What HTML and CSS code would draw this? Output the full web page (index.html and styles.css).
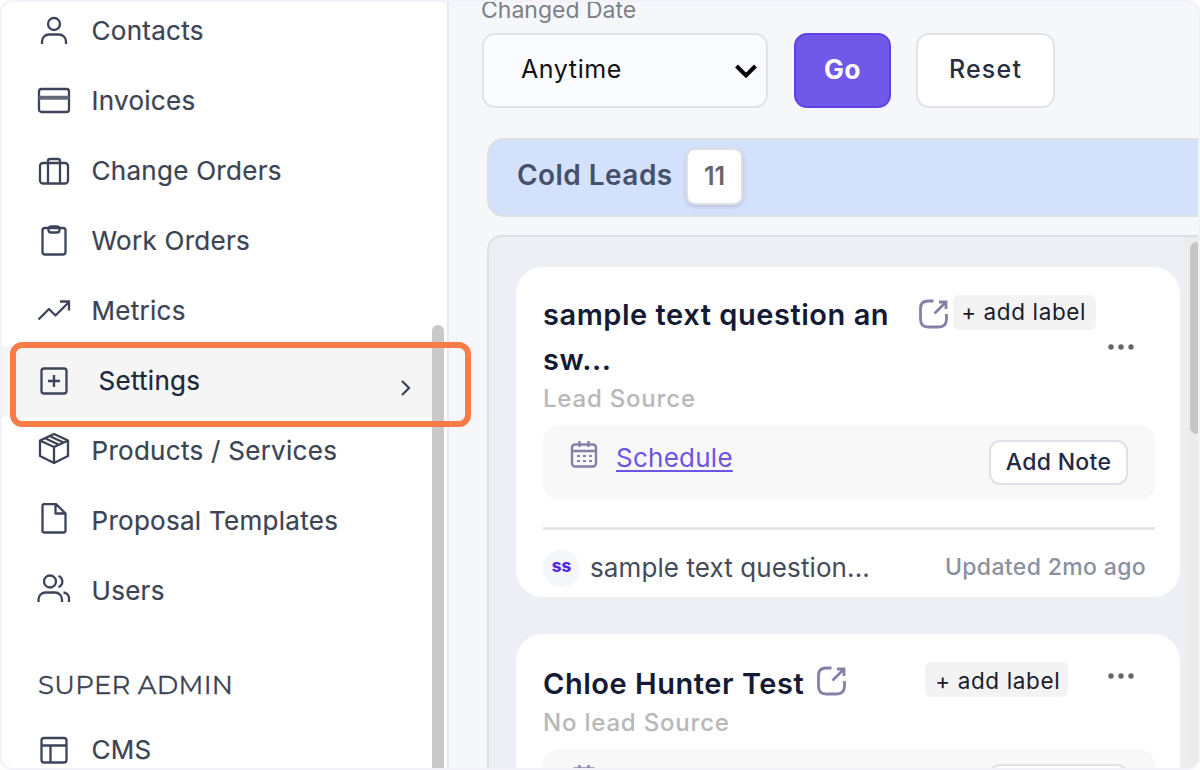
FILE: index.html
```html
<!DOCTYPE html>
<html lang="en">
<head>
<meta charset="utf-8">
<title>Cold Leads</title>
<link rel="stylesheet" href="styles.css">
</head>
<body>
<div class="app">
  <aside class="sidebar">
    <nav class="menu">
      <a class="item"><svg class="icon" viewBox="0 0 36 36"><circle cx="18" cy="11" r="6"/><path d="M6 31v-2.500a7 7 0 0 1 7-7h10a7 7 0 0 1 7 7V31"/></svg><span>Contacts</span></a>
      <a class="item"><svg class="icon" viewBox="0 0 36 36"><rect x="3" y="6" width="30" height="23" rx="2.500"/><path class="stripe" d="M3 14.800h30"/></svg><span>Invoices</span></a>
      <a class="item"><svg class="icon" viewBox="0 0 36 36"><rect x="4" y="10" width="28" height="20.500" rx="3"/><path d="M12 30V8q0-2 2-2h8q2 0 2 2v22"/></svg><span>Change Orders</span></a>
      <a class="item"><svg class="icon" viewBox="0 0 36 36"><rect x="6.500" y="5" width="23" height="26.500" rx="2.500"/><path d="M12.500 6.500q0-3 3-3h5q3 0 3 3v.5q0 2.500-2.500 2.500h-6q-2.500 0-2.500-2.500z"/></svg><span>Work Orders</span></a>
      <a class="item"><svg class="icon" viewBox="0 0 36 36"><path d="M2.500 26.500 13 16l6.500 6.500L32.500 9.500M24 8.500h9v9"/></svg><span>Metrics</span></a>
      <a class="item active"><svg class="icon" viewBox="0 0 36 36"><rect x="5.500" y="5.500" width="25" height="25" rx="2.500"/><path d="M18 12v12M12 18h12"/></svg><span>Settings</span><svg class="chevron" viewBox="0 0 12 18"><path d="m2 2 7 7-7 7"/></svg></a>
      <a class="item"><svg class="icon" viewBox="0 0 36 36"><path d="M18 1 32 7.500V23l-14 7-14-7V7.500zM4 7.500 18 14l14-6.500M18 14v16M9 5.200l14 6.500M13.500 3l14 6.500"/></svg><span>Products / Services</span></a>
      <a class="item"><svg class="icon" viewBox="0 0 36 36"><path d="M6.500 3q0-2 2-2H20l9.500 9.500v17q0 2-2 2h-19q-2 0-2-2zM19.500 1.500v9h10"/></svg><span>Proposal Templates</span></a>
      <a class="item"><svg class="icon" viewBox="0 0 36 36"><circle cx="14" cy="8.500" r="6"/><path d="M2.500 29v-2.500a7 7 0 0 1 7-7H19a7 7 0 0 1 7 7V29M22.500 3a6 6 0 0 1 0 11.200M27.500 19.500a6 6 0 0 1 5.500 6.500v3"/></svg><span>Users</span></a>
      <h2 class="group"><span>SUPER ADMIN</span></h2>
      <a class="item"><svg class="icon" viewBox="0 0 36 36"><rect x="5.500" y="6" width="25" height="24.500" rx="2.500"/><path d="M5.500 13.500h25M14.500 13.500v17"/></svg><span>CMS</span></a>
    </nav>
    <i class="side-thumb"></i>
  </aside>
  <main class="main">
    <div class="label"><span>Changed Date</span></div>
    <div class="filters">
      <div class="select"><span>Anytime</span><svg viewBox="0 0 24 16"><path d="m2.500 3 9.500 9.500L21.500 3"/></svg></div>
      <button class="btn go"><span>Go</span></button>
      <button class="btn reset"><span>Reset</span></button>
    </div>
    <header class="column-head"><span class="column-name">Cold Leads</span><span class="count">11</span></header>
    <section class="list">
      <div class="cards">
        <article class="card">
          <div class="card-top two-line">
            <h3><span>sample text question an</span><br><span>sw...</span></h3>
            <svg class="open" viewBox="0 0 30 30"><path d="M14.500 2H9Q1.500 2 1.500 9.500v10.500Q1.500 28 9 28h10.500Q27.500 28 27.500 20v-5M15.500 14.500 26 4M20 3h7v7"/></svg>
            <div class="tools"><span class="tag">+ add label</span><svg class="dots" viewBox="0 0 28 8"><circle cx="4" cy="4" r="2.700"/><circle cx="14" cy="4" r="2.700"/><circle cx="24" cy="4" r="2.700"/></svg></div>
          </div>
          <p class="source">Lead Source</p>
          <div class="schedule">
            <svg class="cal" viewBox="0 0 28 30"><rect x="2" y="4.500" width="24" height="22" rx="3"/><path d="M2 11h24M9.500 1v6M18.500 1v6"/><path class="pips" d="M7 16h3M13 16h3M19 16h3M7 21h3M13 21h3M19 21h3"/></svg>
            <a class="link">Schedule</a><button class="note"><span>Add Note</span></button>
          </div>
          <footer class="foot"><span class="avatar">ss</span><span class="who">sample text question...</span><span class="when">Updated 2mo ago</span></footer>
        </article>
        <article class="card">
          <div class="card-top">
            <h3><span>Chloe Hunter Test</span></h3>
            <svg class="open" viewBox="0 0 30 30"><path d="M14.500 2H9Q1.500 2 1.500 9.500v10.500Q1.500 28 9 28h10.500Q27.500 28 27.500 20v-5M15.500 14.500 26 4M20 3h7v7"/></svg>
            <div class="tools"><span class="tag">+ add label</span><svg class="dots" viewBox="0 0 28 8"><circle cx="4" cy="4" r="2.700"/><circle cx="14" cy="4" r="2.700"/><circle cx="24" cy="4" r="2.700"/></svg></div>
          </div>
          <p class="source">No lead Source</p>
          <div class="schedule">
            <svg class="cal" viewBox="0 0 28 30"><rect x="2" y="4.500" width="24" height="22" rx="3"/><path d="M2 11h24M9.500 1v6M18.500 1v6"/></svg>
            <button class="note"></button>
          </div>
        </article>
      </div>
      <div class="track"><i></i></div>
    </section>
  </main>
  <div class="highlight"></div>
</div>
</body>
</html>
```
FILE: styles.css
```css
* { box-sizing: border-box; }
body { margin: 0; width: 1200px; height: 770px; overflow: hidden; background: #fff; font-family: Inter, "Liberation Sans", sans-serif; }
h2, h3, p { margin: 0; font-weight: 400; }
button { font-family: inherit; padding: 0; margin: 0; }
span { white-space: nowrap; }
.app { position: relative; width: 1200px; height: 770px; display: flex; border: 2px solid #f2f2f8; border-radius: 12px; overflow: hidden; background: #f6f7fb; }
.sidebar { position: relative; width: 447px; flex: none; background: #fff; border-right: 2px solid #e7e8f1; overflow: hidden; }
.menu { margin-top: -6px; }
.item { display: flex; align-items: center; height: 70px; padding-left: 34px; color: #3c4353; font-size: 26px; letter-spacing: .28px; }
.icon { width: 36px; height: 36px; flex: none; margin-right: 19.500px; fill: none; stroke: #3d4459; stroke-width: 2.3; stroke-linejoin: round; }
.icon .stripe { stroke-width: 4; stroke: #62687a; }
.item > span { padding-bottom: 2px; -webkit-text-stroke: .2px; }
.active { background: #f5f5f5; color: #20263a; width: 430px; position: relative; top: 1px; }
.active > span { margin-left: 7px; padding-bottom: 3px; }
.active .icon { margin-top: -2px; }
.chevron { width: 12px; height: 18px; margin: 12px 20px 0 auto; fill: none; stroke: #3d4459; stroke-width: 2.2; }
.group { height: 89px; padding: 41px 0 0 36px; font-family: Montserrat, Inter, sans-serif; font-size: 26px; letter-spacing: .3px; line-height: 36px; color: #3c4353; -webkit-text-stroke: .3px; }
.side-thumb { position: absolute; left: 430px; top: 323px; width: 12px; height: 460px; border-radius: 6px; background: #c9c9c9; }
.main { flex: 1; min-width: 0; padding-left: 33px; }
.label { height: 37px; margin: -6px 0 0 -1px; line-height: 28px; font-size: 23px; color: #7c7f88; }
.filters { display: flex; height: 75px; gap: 26px; }
.select { width: 286px; display: flex; align-items: center; padding: 0 8px 4px 37px; border: 2px solid #e2e3e8; border-radius: 13px; background: #fafbfe; font-size: 25px; letter-spacing: .6px; color: #111; }
.select svg { width: 24px; height: 16px; margin-left: auto; margin-top: 5px; fill: none; stroke: #000; stroke-width: 4; }
.btn { border: 2px solid #e2e3e8; border-radius: 13px; background: #fff; font-size: 25px; letter-spacing: 1.2px; padding-bottom: 4px; }
.go { width: 97px; background: #7058e8; border-color: #633fe5; color: #fff; font-size: 26.500px; letter-spacing: .4px; font-weight: 700; }
.reset { width: 139px; margin-left: -1px; color: #292d3e; font-weight: 500; }
.column-head { display: flex; height: 79px; margin: 30px 0 0 5px; padding-left: 28px; border: 2px solid #dedfe3; border-right: 0; border-radius: 17px 0 0 17px; background: #d4e1fc; }
.column-name { width: 169px; line-height: 71px; font-size: 28px; font-weight: 600; letter-spacing: .45px; color: #465069; }
.count { width: 57px; height: 57px; margin-top: 8px; border: 2px solid #e0e0e3; border-radius: 9px; background: #fff; box-shadow: 0 2px 4px #0002; font-size: 25px; font-weight: 600; line-height: 52px; text-align: center; color: #666; }
.list { display: flex; height: 540px; margin: 18px 0 0 5px; border: 2px solid #dedfe2; border-right: 0; border-radius: 15px 0 0 0; background: #edeff5; }
.cards { width: 696px; flex: none; padding: 30px 5px 0 27px; }
.card { height: 330px; padding: 24px 25px 0 27px; margin-bottom: 37px; border-radius: 27px; background: #fff; }
.card-top { display: flex; height: 51px; }
.two-line { height: 94px; }
h3 { padding-top: 1px; font-size: 29px; font-weight: 600; letter-spacing: .54px; line-height: 45px; color: #141a34; }
.card:nth-child(2) h3 { padding-top: 3px; }
.open { width: 30px; height: 30px; flex: none; margin: 8px 0 0 13px; fill: none; stroke: #8580a7; stroke-width: 2.8; }
.two-line .open { margin-left: 30px; }
.tools { display: flex; flex: 1; margin-left: 4px; }
.tag { height: 35px; width: 143px; margin-top: 4px; border-radius: 6px; background: #f3f3f3; font-size: 22.500px; letter-spacing: .62px; line-height: 34px; padding-left: 8px; color: #191c2a; }
.card:nth-child(2) .tag { margin-left: 74px; padding: 2px 0 0 10px; }
.dots { width: 28px; height: 8px; margin: 14px 20px 0 auto; fill: #666; }
.two-line .tools { flex-direction: column; }
.two-line .dots { margin-top: 13px; }
.source { height: 40px; line-height: 28px; font-size: 24px; font-weight: 500; letter-spacing: .8px; color: #b8b8b8; }
.schedule { display: flex; height: 75px; border-radius: 16px; background: #f8f8f8; }
.cal { width: 28px; height: 30px; margin: 15px 0 0 27px; fill: none; stroke: #8580a7; stroke-width: 2.4; }
.cal .pips { stroke-width: 2; }
.link { margin: 16px 0 0 18px; height: 34px; line-height: 34px; font-size: 26px; letter-spacing: .25px; color: #6e54e5; text-decoration: underline; text-decoration-thickness: 2px; text-underline-offset: 3px; }
.note { width: 139px; height: 45px; margin: 15px 27px 0 auto; padding-bottom: 2px; border: 2px solid #dfe0e8; border-radius: 11px; background: #fff; font-size: 23px; font-weight: 500; letter-spacing: .3px; color: #242944; }
.foot { display: flex; margin-top: 27px; border-top: 3px solid #e4e4e4; padding-top: 20px; line-height: 36px; }
.avatar { width: 37px; height: 37px; border-radius: 50%; background: #f5f6fb; color: #512be0; font-size: 17px; font-weight: 800; line-height: 33px; text-align: center; }
.who { margin-left: 10px; font-size: 26px; letter-spacing: .1px; color: #454b5b; }
.when { margin: -1px 9px 0 auto; font-size: 23px; font-weight: 500; letter-spacing: .35px; color: #8990a0; }
.track { flex: 1; padding: 5px 0 0 5px; background: #ececec; }
.track i { display: block; width: 13px; height: 192px; border-radius: 7px; background: #c6c6c6; }
.highlight { position: absolute; left: 8px; top: 340px; width: 461px; height: 85px; border: 6px solid #f87b48; border-radius: 12px; }
```
